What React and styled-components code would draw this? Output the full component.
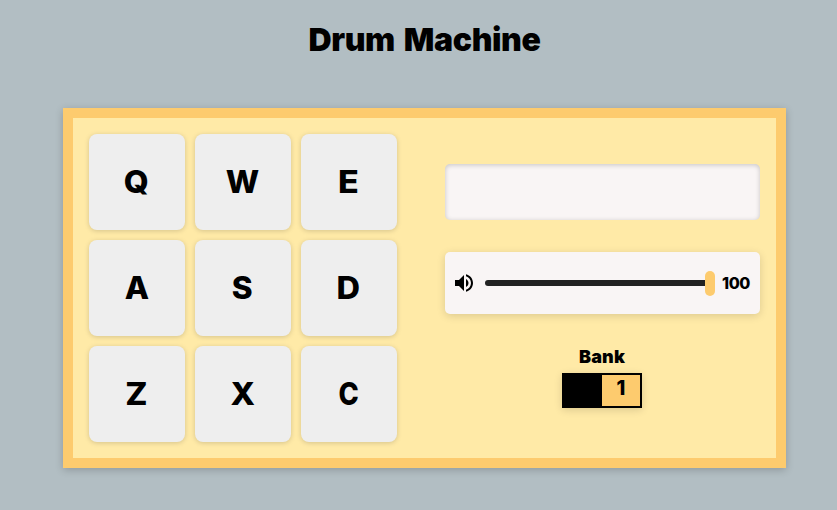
import React, { useState } from "react";
import styled, { createGlobalStyle } from "styled-components";

const GlobalStyle = createGlobalStyle`
  *, *::before, *::after { box-sizing: border-box; }
  body {
    margin: 0;
    background: #b2bec3;
    color: #000;
    font-family: Inter, "Noto Sans", sans-serif;
    font-weight: 800;
  }
`;

const Page = styled.main`
  display: flex;
  flex-direction: column;
  align-items: center;
  height: 510px;
  padding-left: 12px;
  overflow: hidden;
`;

const Title = styled.h1`
  margin: 20px 0 48px;
  height: 40px;
  line-height: 40px;
  font-size: 32px;
  font-weight: 900;
  letter-spacing: -0.4px;
  word-spacing: 3px;
  white-space: nowrap;
`;

const Machine = styled.section`
  display: flex;
  gap: 48px;
  width: 723px;
  height: 360px;
  padding: 16px;
  background: #ffeaa7;
  border: 10px solid #fdcb6e;
  box-shadow: 0 2px 8px rgba(0, 0, 0, 0.2);
`;

const PadGrid = styled.div`
  display: grid;
  grid-template-columns: repeat(3, 96px);
  grid-auto-rows: 96px;
  gap: 10px;
`;

const Pad = styled.button`
  display: flex;
  align-items: center;
  justify-content: center;
  padding: 0 1px 2px 0;
  border: 0;
  border-radius: 8px;
  background: #eee;
  color: #000;
  box-shadow: 0 1px 5px rgba(0, 0, 0, 0.17);
  font: 800 31px/1 Inter, sans-serif;
`;

const PadLabel = styled.span`
  display: block;
  transform: scaleX(${(p) => p.$stretch});
`;

const Controls = styled.div`
  display: flex;
  flex-direction: column;
  align-items: center;
  width: 315px;
  padding-top: 30px;
`;

const Display = styled.div`
  width: 100%;
  height: 56px;
  border-radius: 5px;
  background: #f9f5f5;
  box-shadow: inset 0 1px 5px rgba(0, 0, 0, 0.2);
`;

const Volume = styled.div`
  display: flex;
  align-items: center;
  width: 100%;
  height: 62px;
  margin: 32px 0;
  padding-left: 7px;
  border-radius: 5px;
  background: #f9f5f5;
  box-shadow: 0 2px 8px rgba(0, 0, 0, 0.14);
`;

const SpeakerIcon = styled.svg`
  width: 24px;
  height: 24px;
  margin-right: 9px;
  fill: #000;
`;

const Slider = styled.input`
  appearance: none;
  width: 230px;
  height: 6px;
  margin: 0;
  border-radius: 3px;
  background: #222;

  &::-webkit-slider-thumb {
    appearance: none;
    width: 10px;
    height: 25px;
    border-radius: 5px;
    background: #fdcb6e;
  }
`;

const Level = styled.output`
  margin-left: 7px;
  font-size: 16px;
  line-height: 20px;
  letter-spacing: -0.4px;
`;

const BankArea = styled.div`
  display: flex;
  flex-direction: column;
  align-items: center;
  width: 80px;
  margin-right: 1px;
`;

const BankLabel = styled.span`
  height: 21px;
  margin-bottom: 6px;
  font-size: 18px;
  font-weight: 900;
  line-height: 22px;
  letter-spacing: 0.2px;
`;

const BankSwitch = styled.button`
  display: flex;
  justify-content: flex-end;
  width: 80px;
  height: 35px;
  padding: 0;
  border: 2px solid #000;
  background: #000;
  box-shadow: 0 2px 8px rgba(0, 0, 0, 0.14);
`;

const BankNumber = styled.span`
  width: 38px;
  height: 31px;
  background: #fdcb6e;
  color: #000;
  font: 800 20px/26px Inter, sans-serif;
  text-align: center;
`;

const pads = [
  ["Q", 1.03], ["W", 1.02], ["E", 1.1],
  ["A", 1.02], ["S", 1.02], ["D", 1.05],
  ["Z", 1.06], ["X", 1.04], ["C", 0.88],
];

export default function App() {
  const [volume, setVolume] = useState(100);
  const [bank, setBank] = useState(1);
  return (
    <>
      <GlobalStyle />
      <Page>
        <Title>Drum Machine</Title>
        <Machine>
          <PadGrid>
            {pads.map(([key, stretch]) => (
              <Pad key={key}><PadLabel $stretch={stretch}>{key}</PadLabel></Pad>
            ))}
          </PadGrid>
          <Controls>
            <Display />
            <Volume>
              <SpeakerIcon viewBox="0 0 24 24" aria-hidden="true">
                <path d="M3 9v6h4l5 5V4L7 9H3zm13.5 3c0-1.77-1.02-3.29-2.5-4.03v8.05c1.48-.73 2.5-2.25 2.5-4.02zM14 3.23v2.06c2.89.86 5 3.54 5 6.71s-2.11 5.85-5 6.71v2.06c4.01-.91 7-4.49 7-8.77s-2.99-7.86-7-8.77z" />
              </SpeakerIcon>
              <Slider
                type="range"
                min="0"
                max="100"
                aria-label="Volume"
                value={volume}
                onChange={(e) => setVolume(Number(e.target.value))}
              />
              <Level>{volume}</Level>
            </Volume>
            <BankArea>
              <BankLabel>Bank</BankLabel>
              <BankSwitch onClick={() => setBank(bank === 1 ? 2 : 1)}>
                <BankNumber>{bank}</BankNumber>
              </BankSwitch>
            </BankArea>
          </Controls>
        </Machine>
      </Page>
    </>
  );
}
